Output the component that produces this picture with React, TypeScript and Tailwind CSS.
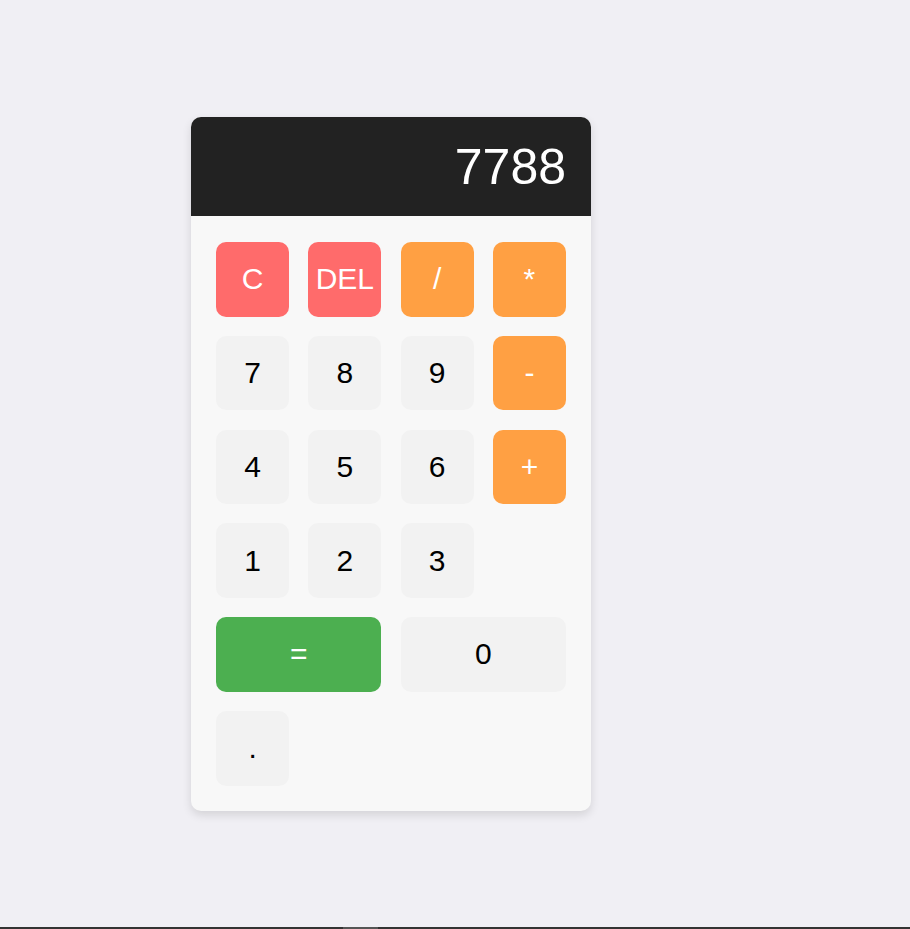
import React from "react";

type Btn = { label: string; kind: "red" | "orange" | "num" | "green"; span?: boolean };

const buttons: Btn[] = [
  { label: "C", kind: "red" },
  { label: "DEL", kind: "red" },
  { label: "/", kind: "orange" },
  { label: "*", kind: "orange" },
  { label: "7", kind: "num" },
  { label: "8", kind: "num" },
  { label: "9", kind: "num" },
  { label: "-", kind: "orange" },
  { label: "4", kind: "num" },
  { label: "5", kind: "num" },
  { label: "6", kind: "num" },
  { label: "+", kind: "orange" },
  { label: "1", kind: "num" },
  { label: "2", kind: "num" },
  { label: "3", kind: "num" },
  { label: "=", kind: "green", span: true },
  { label: "0", kind: "num", span: true },
  { label: ".", kind: "num" },
];

const kindClass: Record<Btn["kind"], string> = {
  red: "bg-[#ff6b6b] text-white",
  orange: "bg-[#ffa043] text-white",
  num: "bg-[#f2f2f2] text-black",
  green: "bg-[#4caf50] text-white",
};

export default function App() {
  return (
    <div
      className="h-[929px] flex flex-col bg-[#f0eff4]"
      style={{ fontFamily: '"Liberation Sans", Arial, sans-serif' }}
    >
      <div className="flex-1 pt-[117px] pl-[191px]">
        <div className="w-[400px] rounded-[10px] bg-[#f8f8f8] shadow-[0_4px_10px_rgba(0,0,0,0.12)] overflow-hidden">
          <div className="bg-[#222222] h-[99px] px-[25px] flex items-center justify-end text-white text-[50px] leading-[58px]">
            7788
          </div>
          <div className="px-[25px] pt-[26px] pb-[25px] grid grid-cols-4 gap-[19.2px]">
            {buttons.map((b) => (
              <div
                key={b.label}
                className={`h-[74.6px] rounded-[10px] flex items-center justify-center text-[30px] leading-none ${kindClass[b.kind]} ${b.span ? "col-span-2" : ""}`}
              >
                {b.label}
              </div>
            ))}
          </div>
        </div>
      </div>
      <div className="h-[2px] bg-[#333333] flex">
        <div className="w-[343px]" />
        <div className="w-[35px] bg-[#555555]" />
      </div>
    </div>
  );
}
